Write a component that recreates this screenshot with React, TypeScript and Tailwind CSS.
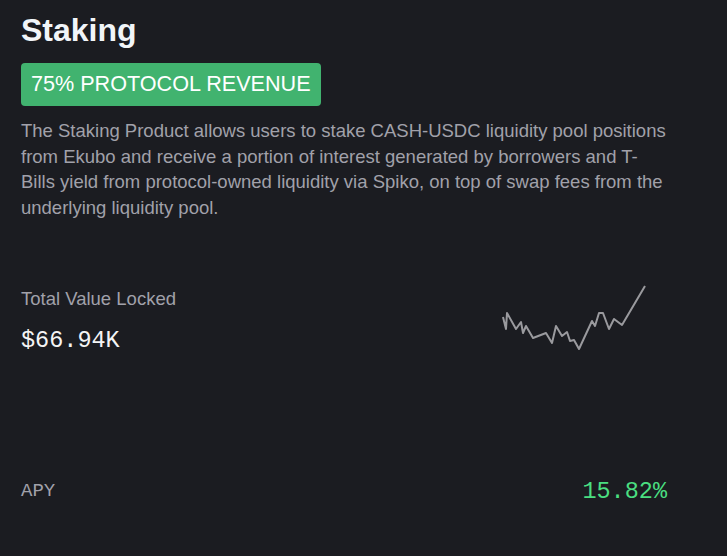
import React from "react";

const spark = [
  [504, 318], [507, 330], [508, 314], [517, 330], [522, 323], [524, 334], [527, 327],
  [534, 339], [547, 334], [553, 344], [557, 327], [563, 337], [568, 333], [571, 342],
  [575, 341], [580, 350], [593, 322], [596, 327], [600, 314], [604, 314], [610, 330],
  [615, 320], [623, 326], [646, 287],
];

const Sparkline = () => {
  const pts = spark.map(([x, y]) => `${x - 502},${y - 285}`).join(" ");
  return (
    <svg width="146" height="68" viewBox="0 0 146 68" fill="none">
      <polyline points={pts} stroke="#9a9a9e" strokeWidth="2" strokeLinejoin="round" />
    </svg>
  );
};

export default function App() {
  return (
    <div className="min-h-[556px] w-full bg-[#1b1c21] font-['Liberation_Sans',Arial,sans-serif]">
      <div className="w-[646px] ml-[21px] pt-[10px]">
        <h1 className="text-[32px] leading-[40px] font-bold text-[#f1f5f9]">Staking</h1>
        <div className="mt-[13px] inline-flex h-[43px] items-center rounded-[4px] bg-[#41b36f] px-[10px] text-[21.6px] text-white">
          75% PROTOCOL REVENUE
        </div>
        <p className="mt-[12px] text-[18.5px] leading-[25.5px] text-[#a1a1aa]">
          The Staking Product allows users to stake CASH-USDC liquidity pool positions from Ekubo and receive a portion of interest generated by borrowers and T-Bills yield from protocol-owned liquidity via Spiko, on top of swap fees from the underlying liquidity pool.
        </p>
        <div className="mt-[64px] flex items-start justify-between">
          <div className="flex flex-col pt-[3px]">
            <span className="text-[18.5px] leading-[24px] text-[#a1a1aa]">Total Value Locked</span>
            <span className="mt-[18px] font-['Liberation_Mono',monospace] text-[23.5px] leading-[24px] text-[#f4f4f5]">$66.94K</span>
          </div>
          <div className="mr-[20px]">
            <Sparkline />
          </div>
        </div>
        <div className="mt-[121px] flex items-center justify-between">
          <span className="text-[19px] text-[#a1a1aa] font-['Liberation_Mono',monospace]">APY</span>
          <span className="font-['Liberation_Mono',monospace] text-[23.5px] text-[#4ade80]">15.82%</span>
        </div>
      </div>
    </div>
  );
}
